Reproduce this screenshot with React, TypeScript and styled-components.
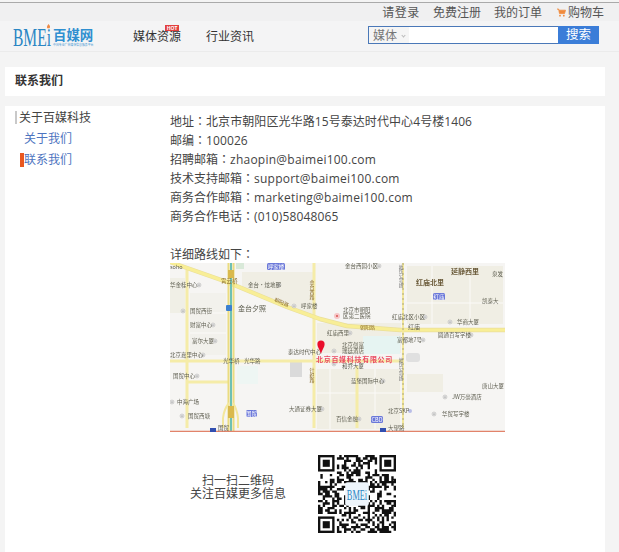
import React from "react";
import styled, { createGlobalStyle } from "styled-components";

const FONT = `"Open Sans", "Noto Sans CJK SC", sans-serif`;

const Global = createGlobalStyle`
  html, body { margin: 0; padding: 0; background: #f4f4f4; }
  body { font-family: ${FONT}; font-size: 12px; color: #444; padding-top: 2px; overflow: hidden; }
  * { box-sizing: border-box; }
`;

const TopBar = styled.div`
  height: 19px;
  border-top: 1px solid #aaa;
  background: #f0f0f1;
  display: flex;
  justify-content: flex-end;
  align-items: center;
  gap: 13px;
  padding: 1px 15px 0 0;
  line-height: 18px;
`;
const TopLink = styled.a<{ $wide?: boolean; $track?: boolean }>`
  color: #555;
  display: flex;
  align-items: center;
  gap: 2px;
  margin-left: ${(p) => (p.$wide ? "2px" : "0")};
  letter-spacing: ${(p) => (p.$track ? "0.6px" : "0")};
`;
const Header = styled.header`
  height: 31px;
  background: #f4f4f5;
  border-bottom: 1px solid #ebebeb;
  display: flex;
  align-items: center;
  position: relative;
  padding-left: 13px;
`;
const NavList = styled.nav`
  display: flex;
  gap: 25px;
  margin-left: 39px;
  font-size: 12px;
`;
const NavItem = styled.a`
  color: #333;
  position: relative;
`;
const Hot = styled.span`
  position: absolute;
  left: 32px;
  top: -2px;
  width: 14px;
  height: 6px;
  background: #e2403f;
  color: #fff;
  font-size: 5px;
  font-weight: 700;
  line-height: 6px;
  text-align: center;
`;
const Search = styled.form`
  display: flex;
  height: 18px;
  margin-left: 114px;
  margin-top: -2px;
`;
const SearchBox = styled.div`
  width: 190px;
  border: 1px solid #4a78b8;
  border-right: 0;
  background: #fff;
  display: flex;
`;
const SearchSelect = styled.span`
  width: 40px;
  background: #f5f5f5;
  color: #777;
  padding-left: 4px;
  line-height: 15px;
  display: flex;
  align-items: center;
  gap: 5px;
`;
const Caret = styled.i`
  width: 3px;
  height: 3px;
  border-right: 1px solid #bbb;
  border-bottom: 1px solid #bbb;
  transform: rotate(45deg);
  margin-top: 1px;
`;
const SearchButton = styled.button`
  width: 41px;
  border: 0;
  padding: 0;
  background: #3b7dd8;
  color: #fff;
  font-family: ${FONT};
  font-size: 12.5px;
  line-height: 18px;
`;
const TitleCard = styled.div`
  margin: 15px 14px 0 5px;
  height: 29px;
  background: #fff;
  padding-left: 10px;
  line-height: 28px;
  font-weight: 700;
  color: #333;
`;
const Main = styled.main`
  margin: 10px 14px 0 5px;
  background: #fff;
  display: grid;
  grid-template-columns: 165px 1fr;
  height: 446px;
  padding-top: 5px;
  overflow: hidden;
`;
const Side = styled.aside`
  padding-left: 10px;
`;
const SideTitle = styled.div`
  border-left: 2px solid #c9c9c9;
  padding-left: 2px;
  line-height: 13px;
  color: #444;
`;
const SideItem = styled.a<{ $gap: number; $active?: boolean }>`
  display: block;
  margin-top: ${(p) => p.$gap}px;
  margin-left: 5px;
  line-height: 14px;
  color: #4d74c0;
  border-left: 4px solid ${(p) => (p.$active ? "#e9581f" : "transparent")};
`;
const Content = styled.div``;
const InfoLine = styled.div`
  line-height: 19px;
  height: 19px;
  color: #444;
`;
const Colon = styled.span`
  font-family: "Noto Sans CJK TC", sans-serif;
`;
const InfoValue = styled.span<{ $track: number }>`
  letter-spacing: ${(p) => p.$track}px;
`;
const MapFrame = styled.svg`
  display: block;
  width: 335px;
  height: 169px;
`;
const QrRow = styled.div`
  margin: 23px 0 0 20px;
  display: flex;
  align-items: center;
  gap: 32px;
`;
const QrText = styled.div`
  width: 96px;
  text-align: center;
  line-height: 13px;
  color: #444;
  margin-bottom: 15px;
`;
const QrSvg = styled.svg`
  display: block;
  width: 78px;
  height: 78px;
`;
const LogoSvg = styled.svg`
  display: block;
`;

const Logo = () => (
  <LogoSvg width="81" height="24" viewBox="0 0 81 24">
    <text x="0" y="21.5" fontFamily="Liberation Serif" fontSize="25" fill="#2a86c4" textLength="38" lengthAdjust="spacingAndGlyphs">BMEi</text>
    <path d="M35.5 0c1.6 1.8 2 3 1 4.2h-2.2c-.8-1.3-.1-2.6 1.2-4.2z" fill="#ee8a45" />
    <text x="40" y="15.5" fontFamily="Noto Sans CJK SC" fontWeight="700" fontSize="13.4" fill="#2f8fd0">百媒网</text>
    <text x="40" y="22" fontFamily="Noto Sans CJK SC" fontSize="2.9" fill="#4b9ad4">中国专业广告媒体信息服务平台</text>
  </LogoSvg>
);

const Cart = () => (
  <svg width="9" height="9" viewBox="0 0 9 9">
    <path d="M0 1h1.6l.9 4.6h5l1-3.4H2" fill="#f08a3c" stroke="#f08a3c" strokeWidth=".8" />
    <circle cx="3" cy="7.7" r=".9" fill="#f08a3c" />
    <circle cx="6.8" cy="7.7" r=".9" fill="#f08a3c" />
  </svg>
);

type Lab = [number, number, string, number?];
const labels: Lab[] = [
  [0, 6, "soho"], [0, 24, "华金桂中心"], [20, 50, "国贸西街"], [20, 64, "财富中心"], [22, 80, "富尔大厦"],
  [0, 94, "北京嘉里中心"], [3, 115, "国贸中心"], [7, 141, "中海广场"], [18, 155, "国贸西塘"],
  [78, 24, "金台·炫地那"], [68, 47.5, "金台夕照", 7], [131, 45, "呼家楼"], [118, 91, "泰达时代中心"],
  [175, 5, "金台西园小区"], [173, 49, "北京市朝阳"], [173, 55, "区第二医院"], [157, 72, "红庙西里"],
  [172, 84, "北京创富"], [172, 90, "瑞廷酒店"], [222, 56, "红庙北区小区"], [287, 61, "华商大厦"],
  [268, 74, "圆通百写字楼"], [227, 79, "富都地7号"], [172, 105, "和乔大厦"], [181, 120, "蓝堡国际中心"],
  [119, 148, "大通证券大厦"], [166, 158, "百信金融"], [218, 150, "北京SKP"], [272, 153, "华贸写字楼"],
  [282, 136, "JW万豪酒店"], [312, 125, "唐山大厦"], [322, 13, "泉发"], [312, 40, "凯泰大"],
  [53, 100, "光华桥"], [74, 100, "光华路"], [48, 167, "国贸"], [218, 167, "大望路"],
];

const Pin = ({ x, y }: { x: number; y: number }) => (
  <g>
    <circle cx={x} cy={y} r="1.9" fill="#fff" stroke="#9a9a9a" strokeWidth=".5" />
    <path d={`M${x - 1} ${y + .6}l1-1.6 1 1.6z`} fill="#777" />
  </g>
);
const pins: [number, number][] = [
  [29, 22], [13, 48], [43, 62], [45, 78], [33, 92], [27, 113], [2, 139], [12, 153], [109, 22], [124, 43],
  [180, 70], [164, 88], [255, 54], [280, 59], [301, 72], [253, 77], [164, 101], [213, 118], [152, 146], [189, 156],
  [264, 151], [275, 134], [209, 3],
];
const Badge = ({ x, y, w, t }: { x: number; y: number; w: number; t: string }) => (
  <g>
    <rect x={x} y={y} width={w} height={7} rx="1.5" fill="#6b78d9" />
    <text x={x + w / 2} y={y + 5.6} textAnchor="middle" fontSize="5.5" fill="#fff">{t}</text>
  </g>
);

const BaiduMap = () => (
  <MapFrame viewBox="0 0 335 169">
    <defs>
      <filter id="soft"><feGaussianBlur stdDeviation="0.3" /></filter>
    </defs>
    <g filter="url(#soft)" fontFamily="Noto Sans CJK SC" fontSize="5.5" fill="#5e5e50">
      <rect width="335" height="169" fill="#f6f5f3" />
      <g fill="#f0eee4">
        <polygon points="72,9 143,9 143,53 112,40 72,24" />
        <rect x="147" y="60" width="84" height="30" />
        <rect x="147" y="106" width="83" height="60" />
        <rect x="237" y="3" width="96" height="58" />
        <rect x="237" y="111" width="36" height="18" />
        <rect x="20" y="30" width="36" height="62" fill="#f2f1ec" />
        <rect x="0" y="15" width="15" height="35" fill="#f0efe6" />
      </g>
      <rect x="193" y="73" width="37" height="18" fill="#e6f4f2" />
      <rect x="67" y="103" width="21" height="18" fill="#eef6f3" />
      <rect x="120" y="99" width="12" height="15" fill="#dadada" />
      <rect x="66" y="0" width="8" height="6" fill="#d9e9d9" />
      <rect x="236" y="90" width="14" height="9" rx="3" fill="#e0e0e0" />
      <g fill="none" stroke="#fbfaf8" strokeWidth="1">
        <path d="M20 50H56M20 70H56M262 3V61M300 3V61M237 40H333M160 106V166M205 106V166M147 130H230" />
      </g>
      <g fill="none" strokeLinejoin="round" strokeLinecap="butt">
        <g stroke="#f5eca8" strokeWidth="3">
          <path d="M144 0V165M17 7V165M17 119H59M0 98H232M187 103V165" />
        </g>
        <path d="M0 -1 57 19 117 44 150 56 177 63 230 67H335" stroke="#eadf9a" strokeWidth="4.5" />
        <path d="M0 -1 57 19 117 44 150 56 177 63 230 67H335" stroke="#f8ee96" strokeWidth="3.2" />
        <path d="M58.5 0V169M63.5 0V169" stroke="#eadc80" strokeWidth="2" />
        <path d="M61 0V169" stroke="#6ec0b4" strokeWidth="2" />
        <path d="M53 165V155Q54 146 59 140M68 165V155Q67 146 63 140" stroke="#f3e79c" strokeWidth="2" />
        <path d="M0 168.5H335" stroke="#e2836a" strokeWidth="1.6" />
        <path d="M233 0V165" stroke="#f3e79c" strokeWidth="2" />
        <path d="M233 0V165" stroke="#9a9a7a" strokeWidth=".8" strokeDasharray="2 3" />
      </g>
      <rect x="58" y="7" width="6" height="8" fill="#d9b94e" />
      <rect x="58" y="143" width="6" height="12" fill="#d9b94e" />
      <text x="51" y="20" fill="#8a6b2a" fontSize="5.5">霄云桥</text>
      <text x="104" y="38" fill="#8a6b2a" fontSize="5" transform="rotate(24 104 38)">朝阳路</text>
      <text x="190" y="66" fill="#8a6b2a" fontSize="5">朝阳路</text>
      <text x="142" y="17" fill="#8a6b2a" fontSize="5" writingMode="tb">金台西路</text>
      <text x="142" y="105" fill="#8a6b2a" fontSize="5" writingMode="tb">针织路</text>
      <text x="231" y="2" fill="#777" fontSize="4.5" writingMode="tb">地铁14号线</text>
      <text x="231" y="95" fill="#777" fontSize="4.5" writingMode="tb">地铁14号线</text>
      <text x="238" y="66" fontSize="6">红庙</text>
      <text x="281" y="11" fontSize="7" fontWeight="700" fill="#6b5b3a">延静西里</text>
      <text x="246" y="22" fontSize="7" fontWeight="700" fill="#6b5b3a">红庙北里</text>
      <Badge x={97} y={0} w={18} t="呼家楼" />
      <Badge x={263} y={30} w={12} t="红庙" />
      <Badge x={76} y={147} w={11} t="国贸" />
      <Badge x={201} y={153} w={12} t="CBD" />
      <rect x="56" y="42" width="6" height="6" rx="1" fill="#3a7fd0" />
      <rect x="40" y="165" width="6" height="4" fill="#3050b0" />
      <rect x="210" y="165" width="6" height="4" fill="#3050b0" />
      <circle cx="240" cy="148" r="2" fill="#b9bde8" />
      <circle cx="167" cy="53" r="3" fill="#f6c6c6" />
      <circle cx="167" cy="53" r="1" fill="#d85050" />
      {pins.map(([x, y]) => <Pin key={`${x}-${y}`} x={x} y={y} />)}
      {labels.map(([x, y, t, s]) => (
        <text key={`${t}-${x}`} x={x} y={y} fontSize={s || 5.5}>{t}</text>
      ))}
      <path d="M151 91c-1.5-5-3.6-7-3.6-10a3.6 3.6 0 0 1 7.2 0c0 3-2.1 5-3.6 10z" fill="#ea0f2c" />
      <text x="146" y="99" fontSize="7" fontWeight="700" fill="#ea4a62" letterSpacing="0.7">北京百媒科技有限公司</text>
    </g>
  </MapFrame>
);

const N = 33;
const qrCells = (): [number, number][] => {
  const cells: [number, number][] = [];
  let s = 73421;
  const rnd = () => { s = (s * 1103515245 + 12345) & 0x7fffffff; return (s >> 16) & 1; };
  const inFinder = (x: number, y: number) => (x < 8 && y < 8) || (x >= N - 8 && y < 8) || (x < 8 && y >= N - 8);
  for (let y = 0; y < N; y++) {
    for (let x = 0; x < N; x++) {
      if (inFinder(x, y)) continue;
      if (x >= 12 && x <= 20 && y >= 12 && y <= 20) continue;
      if (rnd()) cells.push([x, y]);
    }
  }
  return cells;
};
const Finder = ({ x, y }: { x: number; y: number }) => (
  <g>
    <rect x={x} y={y} width="7" height="7" fill="#111" />
    <rect x={x + 1} y={y + 1} width="5" height="5" fill="#fff" />
    <rect x={x + 2} y={y + 2} width="3" height="3" fill="#111" />
  </g>
);
const QrCode = () => (
  <QrSvg viewBox={`0 0 ${N} ${N}`}>
    <path d={qrCells().map(([x, y]) => `M${x} ${y}h1v1h-1z`).join("")} fill="#111" />
    <Finder x={0} y={0} />
    <Finder x={N - 7} y={0} />
    <Finder x={0} y={N - 7} />
    <rect x="11.5" y="11.5" width="10" height="10" rx="1" fill="#eef5fb" />
    <text x="16.5" y="19" textAnchor="middle" fontFamily="Liberation Serif" fontSize="6.6" fill="#2a86c4" textLength="8.6" lengthAdjust="spacingAndGlyphs">BMEi</text>
  </QrSvg>
);

const lines: { label: string; value: string; track: number }[] = [
  { label: "地址", value: "北京市朝阳区光华路15号泰达时代中心4号楼1406", track: 0.08 },
  { label: "邮编", value: "100026", track: 0.1 },
  { label: "招聘邮箱", value: "zhaopin@baimei100.com", track: 0.24 },
  { label: "技术支持邮箱", value: "support@baimei100.com", track: 0.24 },
  { label: "商务合作邮箱", value: "marketing@baimei100.com", track: 0.24 },
  { label: "商务合作电话", value: "(010)58048065", track: 0.15 },
];

export default function App() {
  return (
    <>
      <Global />
      <TopBar>
        <TopLink $track>请登录</TopLink>
        <TopLink>免费注册</TopLink>
        <TopLink>我的订单</TopLink>
        <TopLink $wide><Cart />购物车</TopLink>
      </TopBar>
      <Header>
        <Logo />
        <NavList>
          <NavItem>媒体资源<Hot>HOT</Hot></NavItem>
          <NavItem>行业资讯</NavItem>
        </NavList>
        <Search>
          <SearchBox>
            <SearchSelect>媒体<Caret /></SearchSelect>
          </SearchBox>
          <SearchButton type="button">搜索</SearchButton>
        </Search>
      </Header>
      <TitleCard>联系我们</TitleCard>
      <Main>
        <Side>
          <SideTitle>关于百媒科技</SideTitle>
          <SideItem $gap={8}>关于我们</SideItem>
          <SideItem $gap={7} $active>联系我们</SideItem>
        </Side>
        <Content>
          {lines.map((l) => (
            <InfoLine key={l.label}>
              {l.label}<Colon>：</Colon><InfoValue $track={l.track}>{l.value}</InfoValue>
            </InfoLine>
          ))}
          <InfoLine />
          <InfoLine>详细路线如下<Colon>：</Colon></InfoLine>
          <BaiduMap />
          <QrRow>
            <QrText>扫一扫二维码<br />关注百媒更多信息</QrText>
            <QrCode />
          </QrRow>
        </Content>
      </Main>
    </>
  );
}
